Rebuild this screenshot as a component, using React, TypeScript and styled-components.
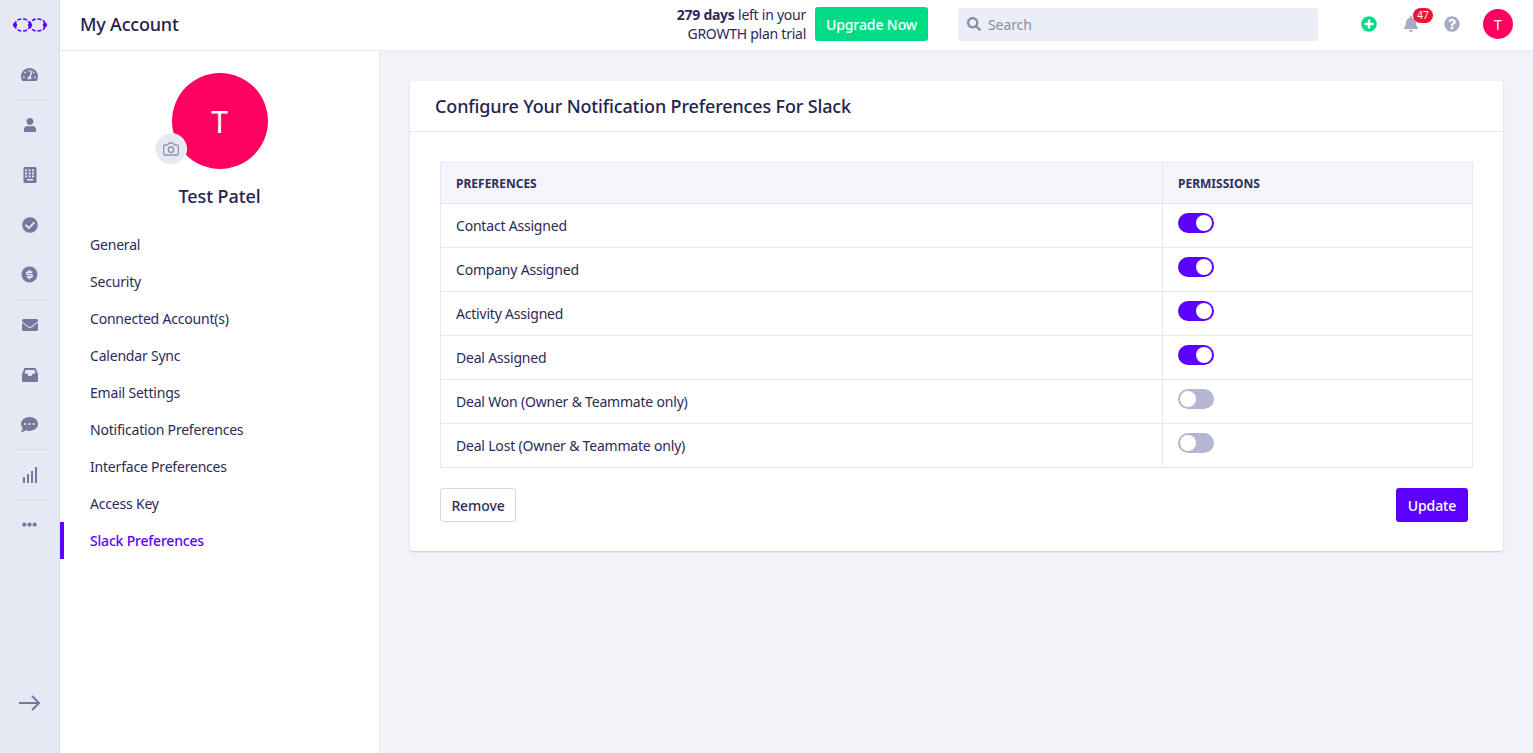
import React from 'react';
import styled, { createGlobalStyle } from 'styled-components';
import { FaUser, FaCheckCircle, FaCommentDots, FaEllipsisH, FaTachometerAlt, FaBell, FaPlusCircle, FaQuestionCircle, FaEnvelope, FaSearch } from 'react-icons/fa';
import { RiMoneyDollarCircleFill } from 'react-icons/ri';
import { FiCamera } from 'react-icons/fi';

const Global = createGlobalStyle`
  html, body { margin: 0; padding: 0; height: 100%; }
  body { font-family: "Noto Sans", "Open Sans", sans-serif; color: #24234f; background: #f1f3f9; overflow: hidden; }
  * { box-sizing: border-box; }
`;

const Shell = styled.div`display: flex; width: 100%; height: 753px;`;
const Rail = styled.nav`
  width: 60px; flex: none; height: 100%; background: #e6e8f3; border-right: 1px solid #d9dbe8;
  display: flex; flex-direction: column; align-items: center; color: #77779d;
`;
const RailLogo = styled.div`height: 50px; width: 100%; display: flex; align-items: center; justify-content: center;`;
const RailItem = styled.div<{ $divided?: boolean }>`
  height: 50px; width: 38px; display: flex; align-items: center; justify-content: center; flex: none;
  border-bottom: 1px solid ${p => (p.$divided ? '#dcdeeb' : 'transparent')};
`;
const RailSpacer = styled.div`flex: 1;`;
const RailFoot = styled.div`height: 58px; display: flex; align-items: flex-start; justify-content: center; color: #77779d;`;

const Body = styled.div`flex: 1; min-width: 0; display: flex; flex-direction: column;`;
const Header = styled.header`
  height: 51px; flex: none; background: #fff; border-bottom: 1px solid #e6e7ef; display: flex; align-items: center; padding: 0 20px 2px 20px;
`;
const Title = styled.h1`margin: 0; font-size: 18px; font-weight: 500; flex: 1; letter-spacing: -0.2px; color: #24234f;`;
const Trial = styled.div`font-size: 14px; line-height: 19px; text-align: right; width: 140px; letter-spacing: -0.25px; color: #2b2a58; b { font-weight: 700; }`;
const UpgradeButton = styled.button`
  margin-left: 9px; width: 113px; height: 34px; border: 0; border-radius: 3px; background: #00dc85; color: #fff;
  font: 500 14px "Noto Sans", sans-serif; letter-spacing: -0.1px; padding: 0;
`;
const SearchBox = styled.div`
  margin-left: 30px; width: 360px; height: 33px; border-radius: 3px; background: #ebeef6; display: flex; align-items: center; gap: 7px;
  padding-left: 9px; color: #8a8ca3; font-size: 14px; letter-spacing: -0.1px;
`;
const HeaderIcons = styled.div`display: flex; align-items: center; margin-left: 43px;`;
const Bell = styled.div`position: relative; margin-left: 26px; display: flex; color: #a7abc3;`;
const Count = styled.span`
  position: absolute; left: 10px; top: -8px; width: 20px; height: 15px; border-radius: 8px; background: #f0142f; color: #fff;
  font-size: 10px; line-height: 15px; text-align: center;
`;
const Help = styled.div`margin-left: 25px; display: flex; color: #a7abc3;`;
const HeadAvatar = styled.div`
  margin-left: 23px; width: 30px; height: 30px; border-radius: 50%; background: #ff0060; color: #fff; font-size: 14px;
  display: flex; align-items: center; justify-content: center;
`;

const Content = styled.div`flex: 1; min-height: 0; display: flex;`;
const Side = styled.aside`width: 320px; flex: none; background: #fff; border-right: 1px solid #e6e7ef; display: flex; flex-direction: column;`;
const Profile = styled.div`display: flex; flex-direction: column; align-items: center; padding-top: 22px;`;
const AvatarWrap = styled.div`position: relative; width: 96px; height: 96px;`;
const Avatar = styled.div`
  width: 96px; height: 96px; border-radius: 50%; background: #ff0060; color: #fff; font-size: 30px; display: flex; align-items: center; justify-content: center;
`;
const CameraBadge = styled.div`
  position: absolute; left: -16px; top: 61px; width: 30px; height: 30px; border-radius: 50%; background: #e6e9f2;
  color: #8f95ad; display: flex; align-items: center; justify-content: center; box-shadow: 0 0 0 1px #f3f4f8;
`;
const Name = styled.div`margin-top: 15px; font-size: 18px; line-height: 25px; font-weight: 500; letter-spacing: -0.1px; color: #24234f;`;
const Menu = styled.ul`list-style: none; margin: 17px 0 0; padding: 0;`;
const MenuItem = styled.li<{ $active?: boolean }>`
  height: 37px; display: flex; align-items: center; padding-left: ${p => (p.$active ? 26 : 30)}px; font-size: 14px; letter-spacing: -0.2px;
  color: ${p => (p.$active ? '#5c00ff' : '#2b2a58')}; font-weight: ${p => (p.$active ? 500 : 400)};
  border-left: ${p => (p.$active ? '4px solid #5c00ff' : '0')};
`;

const Main = styled.main`flex: 1; min-width: 0; padding: 30px;`;
const Card = styled.section`background: #fff; border-radius: 3px; box-shadow: 0 1px 2px rgba(40, 40, 80, 0.22); height: 470px;`;
const CardHead = styled.div`height: 51px; border-bottom: 1px solid #e9eaf2; padding: 0 25px; display: flex; align-items: center;`;
const CardTitle = styled.h2`margin: 0; font-size: 18px; font-weight: 500; letter-spacing: -0.15px; color: #24234f;`;
const CardBody = styled.div`padding: 30px;`;
const Table = styled.table`width: 100%; border-collapse: collapse; table-layout: fixed; font-size: 14px;`;
const Th = styled.th<{ $w?: number }>`
  height: 41px; padding: 0 15px; text-align: left; background: #f5f6fb; border: 1px solid #e6e7f2; font-size: 12px; font-weight: 700; color: #2f2e5c;
  ${p => (p.$w ? `width: ${p.$w}px;` : '')}
`;
const Td = styled.td`height: 44px; padding: 0 15px 1px; border: 1px solid #e6e7f2; letter-spacing: -0.2px; color: #2b2a58;`;
const Toggle = styled.span<{ $on?: boolean }>`
  display: block; position: relative; width: 36px; height: 20px; border-radius: 10px; margin-top: -4px;
  background: ${p => (p.$on ? '#5c00ff' : '#b5b6d1')};
  &::after {
    content: ''; position: absolute; top: 2px; left: ${p => (p.$on ? '18px' : '2px')}; width: 16px; height: 16px; border-radius: 50%; background: #fff;
  }
`;
const Actions = styled.div`display: flex; justify-content: space-between; margin-top: 20px; padding-right: 5px;`;
const GhostButton = styled.button`
  width: 76px; height: 34px; background: #fff; border: 1px solid #d6d7e3; border-radius: 3px; color: #2f2e5c; font: 500 14px "Noto Sans", sans-serif; letter-spacing: -0.1px; padding: 0;
`;
const PrimaryButton = styled.button`
  width: 72px; height: 34px; background: #5c00ff; border: 0; border-radius: 3px; color: #fff; font: 500 14px "Noto Sans", sans-serif; letter-spacing: -0.1px; padding: 0;
`;

const Logo = () => (
  <svg width="36" height="18" viewBox="0 0 36 18" fill="none">
    <g stroke="#5c00ff" strokeWidth="1.6" strokeDasharray="4 1.7">
      <path d="M3 9C3 4 7 3 11 3c4 0 5 2 7 4 2-2 3-4 7-4 4 0 8 1 8 6" />
      <path d="M3 9c0 5 4 6 8 6 4 0 5-2 7-4 2 2 3 4 7 4 4 0 8-1 8-6" />
    </g>
    <circle cx="3" cy="9" r="2.2" fill="#5c00ff" />
    <circle cx="18" cy="9" r="2.2" fill="#5c00ff" />
    <circle cx="33" cy="9" r="2.2" fill="#5c00ff" />
  </svg>
);
const CalcIcon = () => (
  <svg width="14" height="16" viewBox="0 0 14 16">
    <rect width="13" height="16" x=".5" rx="1.5" fill="currentColor" />
    <g fill="#e6e8f3">
      {[2, 5.5, 9].flatMap(x => [2.5, 5.5, 8.5].map(y => <rect key={`${x}-${y}`} x={x} y={y} width="2" height="1.8" />))}
      <rect x="4" y="12" width="6" height="1.5" />
    </g>
  </svg>
);
const InboxIcon = () => (
  <svg width="16" height="14" viewBox="0 0 16 14">
    <path d="M2.5 0h11L16 6v7a1 1 0 0 1-1 1H1a1 1 0 0 1-1-1V6z" fill="currentColor" />
    <path d="M3.5 2h9l1 3.5H11L9.5 8h-3L5 5.5H2.5z" fill="#e6e8f3" />
  </svg>
);
const SignalIcon = () => (
  <svg width="14" height="16" viewBox="0 0 14 16" fill="currentColor">
    <rect x="0" y="10" width="2" height="6" />
    <rect x="4" y="7" width="2" height="9" />
    <rect x="8" y="4" width="2" height="12" />
    <rect x="12" y="0" width="2" height="16" />
  </svg>
);
const ArrowIcon = () => (
  <svg width="22" height="16" viewBox="0 0 22 16" fill="none" stroke="currentColor" strokeWidth="2">
    <path d="M0 8h20M13 1l7 7-7 7" />
  </svg>
);

const prefs: [string, boolean][] = [
  ['Contact Assigned', true],
  ['Company Assigned', true],
  ['Activity Assigned', true],
  ['Deal Assigned', true],
  ['Deal Won (Owner & Teammate only)', false],
  ['Deal Lost (Owner & Teammate only)', false],
];
const menu = ['General', 'Security', 'Connected Account(s)', 'Calendar Sync', 'Email Settings', 'Notification Preferences', 'Interface Preferences', 'Access Key', 'Slack Preferences'];

export default function App() {
  return (
    <Shell>
      <Global />
      <Rail>
        <RailLogo><Logo /></RailLogo>
        <RailItem $divided><FaTachometerAlt size={17} /></RailItem>
        <RailItem><FaUser size={14} /></RailItem>
        <RailItem><CalcIcon /></RailItem>
        <RailItem><FaCheckCircle size={16} /></RailItem>
        <RailItem $divided><RiMoneyDollarCircleFill size={19} /></RailItem>
        <RailItem><FaEnvelope size={16} /></RailItem>
        <RailItem><InboxIcon /></RailItem>
        <RailItem $divided><FaCommentDots size={17} /></RailItem>
        <RailItem $divided><SignalIcon /></RailItem>
        <RailItem><FaEllipsisH size={15} /></RailItem>
        <RailSpacer />
        <RailFoot><ArrowIcon /></RailFoot>
      </Rail>
      <Body>
        <Header>
          <Title>My Account</Title>
          <Trial><b>279 days</b> left in your GROWTH plan trial</Trial>
          <UpgradeButton>Upgrade Now</UpgradeButton>
          <SearchBox><FaSearch size={14} />Search</SearchBox>
          <HeaderIcons>
            <FaPlusCircle size={16} color="#00dc85" />
            <Bell><FaBell size={16} /><Count>47</Count></Bell>
            <Help><FaQuestionCircle size={16} /></Help>
            <HeadAvatar>T</HeadAvatar>
          </HeaderIcons>
        </Header>
        <Content>
          <Side>
            <Profile>
              <AvatarWrap>
                <Avatar>T</Avatar>
                <CameraBadge><FiCamera size={16} /></CameraBadge>
              </AvatarWrap>
              <Name>Test Patel</Name>
            </Profile>
            <Menu>
              {menu.map(m => <MenuItem key={m} $active={m === 'Slack Preferences'}>{m}</MenuItem>)}
            </Menu>
          </Side>
          <Main>
            <Card>
              <CardHead><CardTitle>Configure Your Notification Preferences For Slack</CardTitle></CardHead>
              <CardBody>
                <Table>
                  <thead>
                    <tr><Th $w={722}>PREFERENCES</Th><Th>PERMISSIONS</Th></tr>
                  </thead>
                  <tbody>
                    {prefs.map(([label, on]) => (
                      <tr key={label}><Td>{label}</Td><Td><Toggle $on={on} /></Td></tr>
                    ))}
                  </tbody>
                </Table>
                <Actions>
                  <GhostButton>Remove</GhostButton>
                  <PrimaryButton>Update</PrimaryButton>
                </Actions>
              </CardBody>
            </Card>
          </Main>
        </Content>
      </Body>
    </Shell>
  );
}
